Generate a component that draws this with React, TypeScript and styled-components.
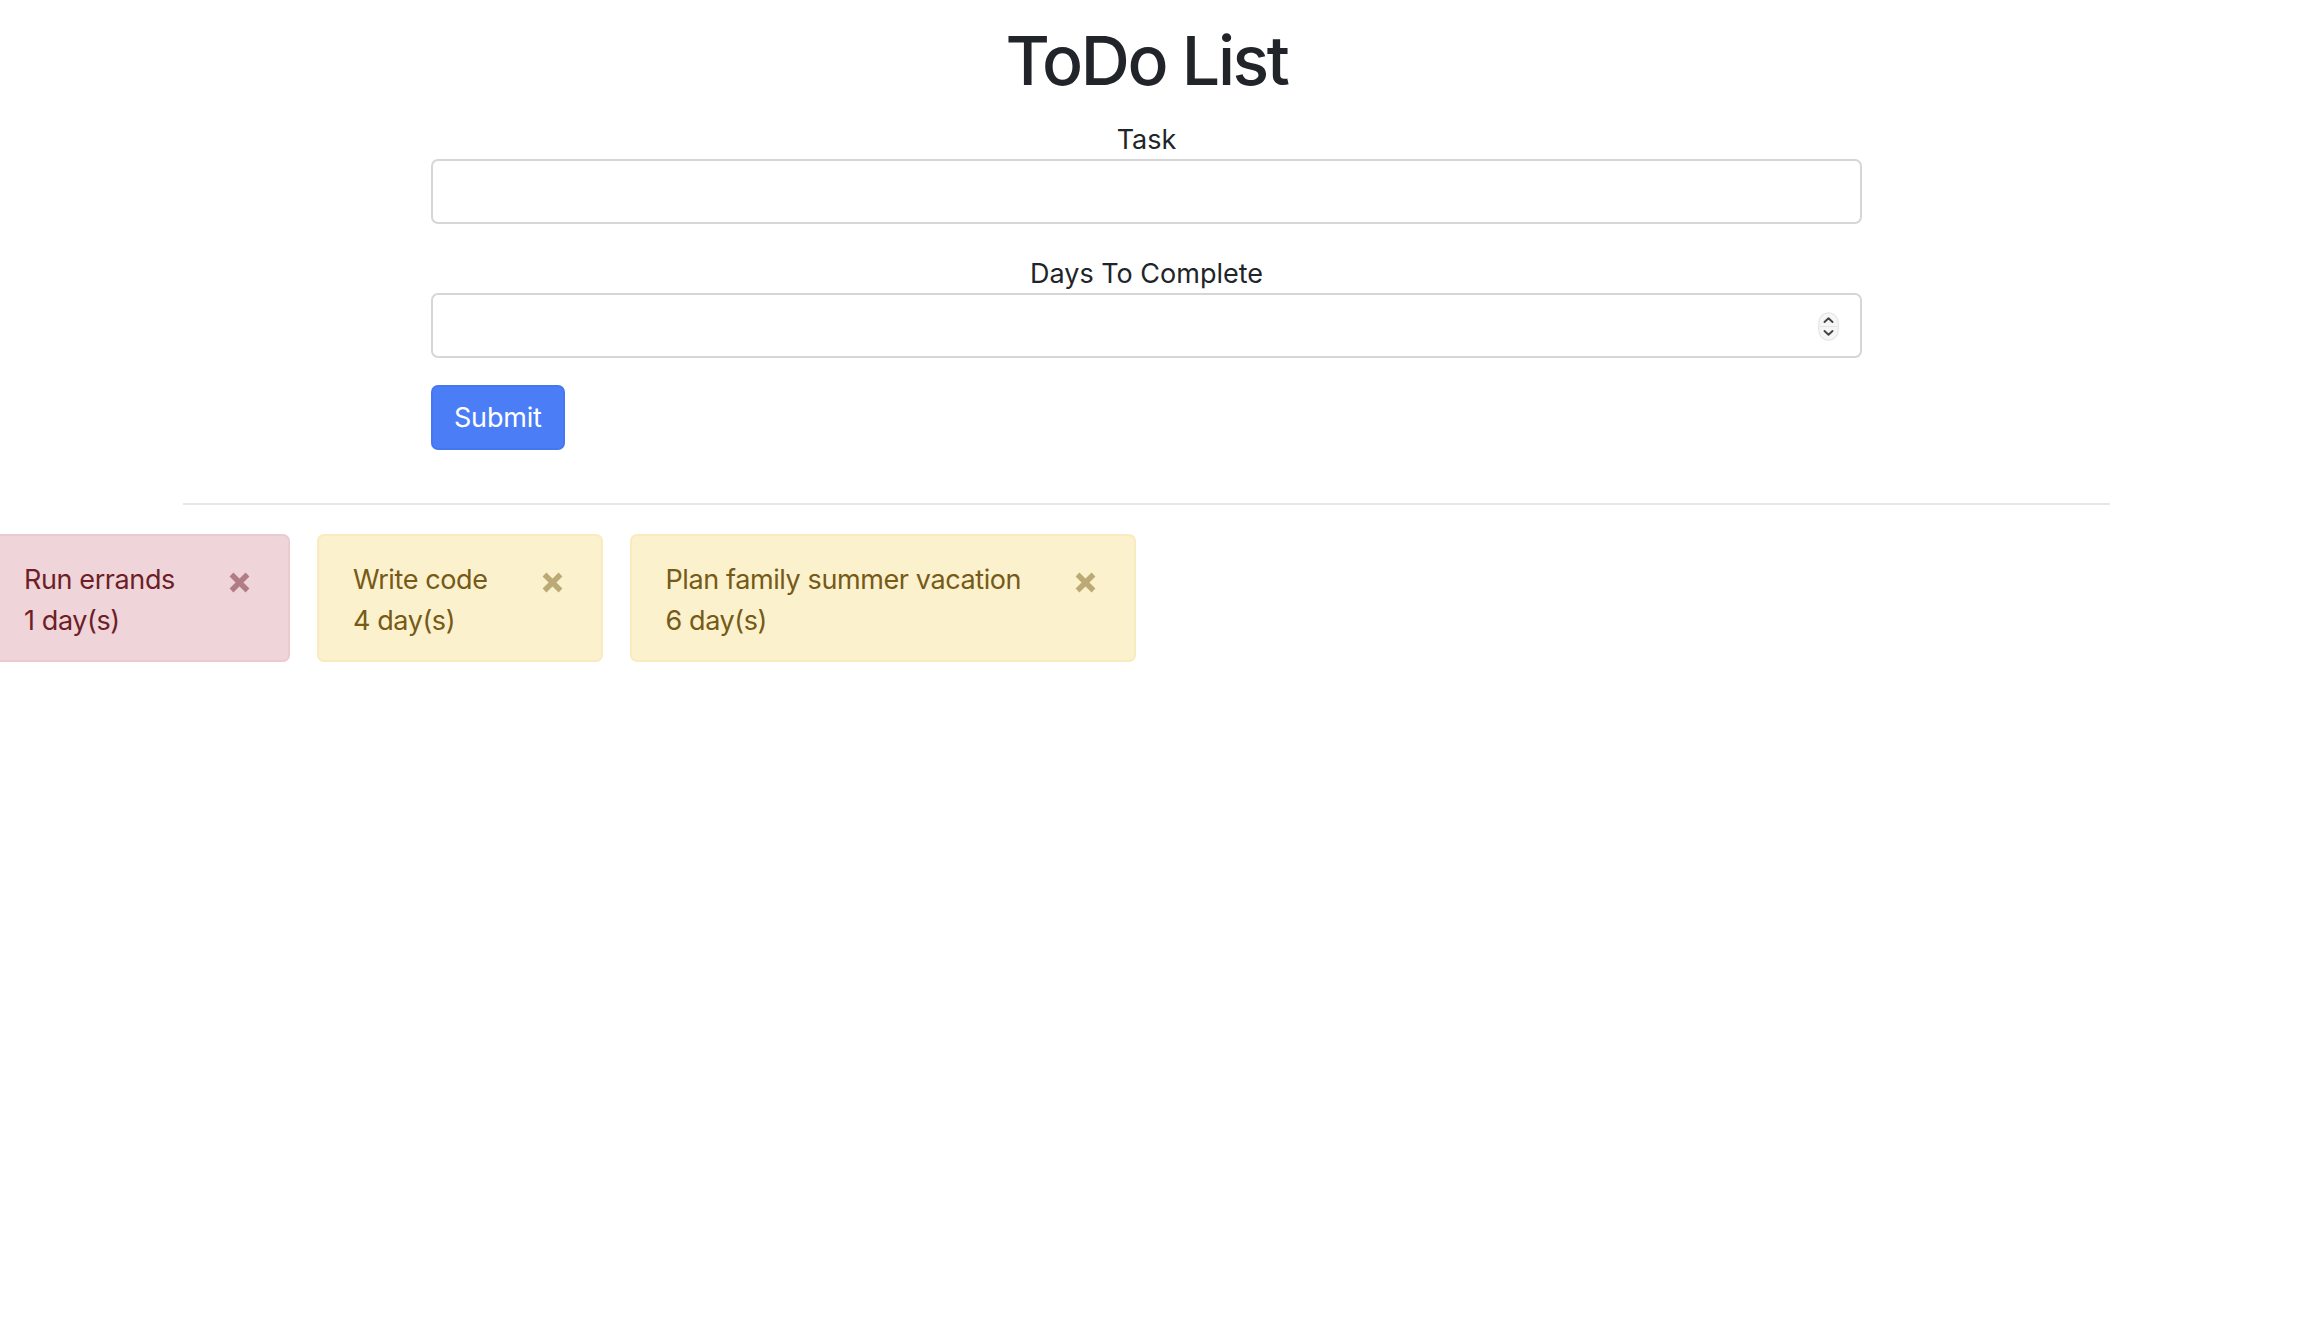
import React from "react";
import styled, { createGlobalStyle } from "styled-components";

const GlobalStyle = createGlobalStyle`
  html, body { margin: 0; padding: 0; background: #ffffff; }
  body {
    font-family: Inter, "Noto Sans", "Liberation Sans", sans-serif;
    color: #212529;
  }
  * { box-sizing: border-box; }
`;

const Page = styled.div`
  width: 100%;
  padding-right: 26px;
  overflow: hidden;
`;

const Title = styled.h1`
  margin: 19px 0 18px;
  font-size: 68px;
  line-height: 82px;
  font-weight: 500;
  letter-spacing: -2.4px;
  text-align: center;
  color: #212529;
`;

const Form = styled.form`
  width: 1431px;
  margin: 0 auto;
  display: flex;
  flex-direction: column;
  align-items: flex-start;
`;

const Field = styled.div`
  width: 100%;
  display: flex;
  flex-direction: column;
  margin-bottom: 29px;
`;

const Label = styled.label`
  display: block;
  text-align: center;
  font-size: 27px;
  line-height: 40px;
  font-weight: 400;
  color: #212529;
  transform: translateY(1px);
`;

const InputWrap = styled.div`
  position: relative;
  width: 100%;
`;

const TextInput = styled.input`
  display: block;
  width: 100%;
  height: 65px;
  padding: 0 20px;
  font-family: inherit;
  font-size: 27px;
  color: #495057;
  background: #fff;
  border: 2px solid #d5d6da;
  border-radius: 7px;
  outline: none;
  appearance: textfield;
  &::-webkit-inner-spin-button,
  &::-webkit-outer-spin-button {
    -webkit-appearance: none;
    margin: 0;
  }
`;

const StepperIcon = styled.svg`
  position: absolute;
  right: 23px;
  top: 19px;
  pointer-events: none;
`;

const SubmitButton = styled.button`
  height: 65px;
  margin-top: -2px;
  padding: 0 21px;
  font-family: inherit;
  font-size: 27px;
  font-weight: 400;
  letter-spacing: -0.2px;
  color: #ffffff;
  background: #4b7ef6;
  border: 2px solid #4577f0;
  border-radius: 7px;
  cursor: pointer;
`;

const Divider = styled.hr`
  width: 1927px;
  margin: 53px auto 0;
  border: 0;
  border-top: 2px solid #e7e7e7;
  height: 0;
`;

const CardRow = styled.div`
  display: flex;
  align-items: flex-start;
  gap: 27px;
  margin: 29px 0 0 -12px;
`;

type Tone = "danger" | "warning";

const tones: Record<Tone, { bg: string; border: string; text: string; x: string }> = {
  danger: { bg: "#efd5d9", border: "#ebcad0", text: "#6e1e27", x: "#b07d85" },
  warning: { bg: "#fcf1cd", border: "#f8ebbf", text: "#765a17", x: "#bcaa76" },
};

const Card = styled.div<{ $tone: Tone }>`
  display: flex;
  align-items: flex-start;
  flex-shrink: 0;
  padding: 24px 38px 19px 34px;
  background: ${(p) => tones[p.$tone].bg};
  border: 2px solid ${(p) => tones[p.$tone].border};
  border-radius: 7px;
  color: ${(p) => tones[p.$tone].text};
  font-size: 27px;
  line-height: 40.5px;
  letter-spacing: -0.4px;
`;

const CardText = styled.div`
  display: flex;
  flex-direction: column;
  white-space: nowrap;
`;

const CloseButton = styled.button<{ $tone: Tone }>`
  display: flex;
  margin: 11px -1px 0 53px;
  padding: 0;
  border: 0;
  background: transparent;
  color: ${(p) => tones[p.$tone].x};
  cursor: pointer;
`;

const todos: { task: string; days: number; tone: Tone }[] = [
  { task: "Run errands", days: 1, tone: "danger" },
  { task: "Write code", days: 4, tone: "warning" },
  { task: "Plan family summer vacation", days: 6, tone: "warning" },
];

const Stepper = () => (
  <StepperIcon width="21" height="29" viewBox="0 0 21 29">
    <rect x="0.75" y="0.75" width="19.5" height="27.5" rx="9.75" fill="#f6f6f7" stroke="#e0e0e3" strokeWidth="1" />
    <line x1="2" y1="14.5" x2="19" y2="14.5" stroke="#e4e4e6" strokeWidth="1" />
    <polyline points="6.5,10 10.5,6.2 14.5,10" fill="none" stroke="#454548" strokeWidth="1.9" strokeLinecap="round" strokeLinejoin="round" />
    <polyline points="6.5,19 10.5,22.8 14.5,19" fill="none" stroke="#454548" strokeWidth="1.9" strokeLinecap="round" strokeLinejoin="round" />
  </StepperIcon>
);

const CloseIcon = () => (
  <svg width="23" height="23" viewBox="0 0 23 23">
    <path d="M3.5 3.5 L19.5 19.5 M19.5 3.5 L3.5 19.5" stroke="currentColor" strokeWidth="5.4" strokeLinecap="butt" />
  </svg>
);

export default function App() {
  return (
    <>
      <GlobalStyle />
      <Page>
        <Title>ToDo List</Title>
        <Form onSubmit={(e) => e.preventDefault()}>
          <Field>
            <Label htmlFor="task">Task</Label>
            <TextInput id="task" type="text" />
          </Field>
          <Field>
            <Label htmlFor="days">Days To Complete</Label>
            <InputWrap>
              <TextInput id="days" type="number" />
              <Stepper />
            </InputWrap>
          </Field>
          <SubmitButton type="submit">Submit</SubmitButton>
        </Form>
        <Divider />
        <CardRow>
          {todos.map((t) => (
            <Card key={t.task} $tone={t.tone}>
              <CardText>
                <span>{t.task}</span>
                <span>{t.days} day(s)</span>
              </CardText>
              <CloseButton $tone={t.tone} aria-label="Remove">
                <CloseIcon />
              </CloseButton>
            </Card>
          ))}
        </CardRow>
      </Page>
    </>
  );
}
